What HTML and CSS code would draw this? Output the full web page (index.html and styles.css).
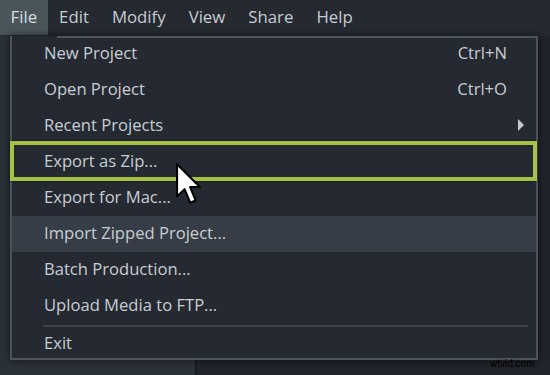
FILE: index.html
```html
<!DOCTYPE html>
<html>
  <head>
    <title>File menu</title>
    <meta name="viewport" content="width=device-width, initial-scale=1.0" />
    <link rel="stylesheet" href="styles.css">
  </head>
  <body>
    <nav class="menubar">
      <span class="menu-title open">File</span>
      <span class="menu-title">Edit</span>
      <span class="menu-title">Modify</span>
      <span class="menu-title">View</span>
      <span class="menu-title">Share</span>
      <span class="menu-title">Help</span>
    </nav>
    <div class="workspace">
      <div class="panel-left"></div>
      <div class="panel-right"></div>
    </div>

    <ul class="dropdown">
      <li class="item"><span>New Project</span><span class="key">Ctrl+N</span></li>
      <li class="item"><span>Open Project</span><span class="key">Ctrl+O</span></li>
      <li class="item"><span>Recent Projects</span><span class="arrow"></span></li>
      <li class="item marked"><span>Export as Zip...</span></li>
      <li class="item"><span>Export for Mac...</span></li>
      <li class="item hover"><span>Import Zipped Project...</span></li>
      <li class="item"><span>Batch Production...</span></li>
      <li class="item"><span>Upload Media to FTP...</span></li>
      <li class="sep"></li>
      <li class="item last"><span>Exit</span></li>
    </ul>

    <svg class="cursor" width="29" height="46" viewBox="0 0 14 22">
      <path d="M1 1 L1 16.5 L4.6 13 L7.4 19.6 L10 18.5 L7.3 12 L12 12 Z"
        fill="#fff" stroke="#000" stroke-width="1" stroke-linejoin="round" />
    </svg>

    <span class="watermark">wtvid.com</span>
  </body>
</html>
```

FILE: styles.css
```css
body {
  margin: 0;
  height: 375px;
  overflow: hidden;
  font-family: "Open Sans", sans-serif;
  background-color: #252a31;
  display: flex;
  flex-direction: column;
}
.menubar {
  display: flex;
  height: 36px;
  background-color: #252a31;
}
.menu-title {
  padding: 0 11.5px;
  line-height: 34px;
  height: 35px;
  font-size: 16.8px;
  color: #c5ccd2;
}
.menu-title.open {
  padding: 0 10.5px;
  background-color: #4a5559;
  color: #d6dde0;
}
.workspace {
  flex: 1;
  display: grid;
  grid-template-columns: 197px 1fr;
}
.panel-left {
  background-color: #2b3237;
  border-right: 2px solid #171a1f;
}
.panel-right {
  background-color: #20242b;
}

/* the open menu sits over the workspace */
.dropdown {
  position: absolute;
  top: 36px;
  left: 10px;
  width: 524px;
  height: 322px;
  margin: 0;
  padding: 0;
  list-style: none;
  background-color: #252a32;
  border: 2px solid #4a5459;
  border-top: 0;
  box-shadow: 0 0 8px rgba(0, 0, 0, 0.6);
}
.dropdown::before {
  content: "";
  position: absolute;
  top: 0;
  left: 45px;
  right: -2px;
  height: 2px;
  background-color: #4a5459;
}
.item {
  position: relative;
  display: flex;
  align-items: center;
  justify-content: space-between;
  box-sizing: border-box;
  height: 36px;
  padding: 0 29px 3px 32px;
  font-size: 16.6px;
  color: #c8ced3;
}
.item.hover {
  background-color: #363d46;
}
.item.last {
  height: 34px;
}
.item.marked::after {
  content: "";
  position: absolute;
  top: -3px;
  bottom: -1px;
  left: -2px;
  right: -1px;
  border: 4px solid #a6c246;
  box-shadow: 0 0 2px rgba(0, 0, 0, 0.7);
}
.key {
  color: #c8ced3;
}
.arrow {
  width: 0;
  height: 0;
  margin-right: -17px;
  border-top: 6px solid transparent;
  border-bottom: 6px solid transparent;
  border-left: 6px solid #c3c9cf;
}
.sep {
  height: 2px;
  margin: 1px 8px 0 31px;
  background-color: #3a4148;
}
.cursor {
  position: absolute;
  top: 162px;
  left: 175px;
}
.watermark {
  position: absolute;
  left: 490px;
  top: 358px;
  font-family: "Liberation Sans", sans-serif;
  font-size: 10px;
  color: #000;
}
```
